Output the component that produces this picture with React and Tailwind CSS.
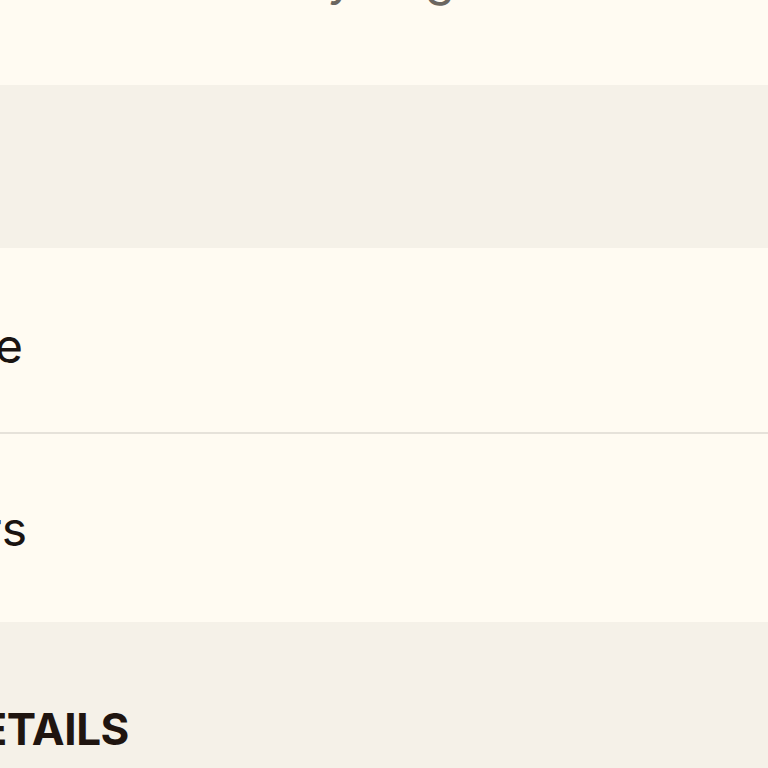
export default function App() {
  return (
    <div className="min-h-screen w-full overflow-hidden bg-[#fffbf2] font-['Inter',sans-serif] text-[#1a1411]">
      {/* intro copy, scrolled mostly out of view */}
      <section className="flex h-[85px] flex-col overflow-hidden bg-[#fffbf2]">
        <p className="-mt-[46px] shrink-0 pl-[246px] text-[48px] leading-[48px] whitespace-nowrap text-[#6b6660]">
          Easy to get started
        </p>
      </section>

      <section className="h-[163px] bg-[#f5f1e8]" />

      {/* feature rows */}
      <ul className="bg-[#fffbf2]">
        <li className="flex h-[186px] items-center border-b-2 border-[#e6e2da] pt-[12px]">
          <div className="-ml-[300px] flex w-[323px] shrink-0 justify-end">
            <span className="shrink-0 text-[48px] leading-[48px] whitespace-nowrap">Simple</span>
          </div>
        </li>
        <li className="flex h-[188px] items-center pt-[2px]">
          <div className="-ml-[300px] flex w-[327px] shrink-0 justify-end">
            <span className="shrink-0 text-[48px] leading-[48px] whitespace-nowrap">Members</span>
          </div>
        </li>
      </ul>

      <section className="h-[146px] bg-[#f5f1e8] pt-[85px]">
        <div className="-ml-[300px] flex w-[429px] justify-end">
          <h2 className="shrink-0 text-[44px] leading-[44px] font-bold tracking-[-0.01em] whitespace-nowrap text-[#1f1510]">
            DETAILS
          </h2>
        </div>
      </section>
    </div>
  );
}
